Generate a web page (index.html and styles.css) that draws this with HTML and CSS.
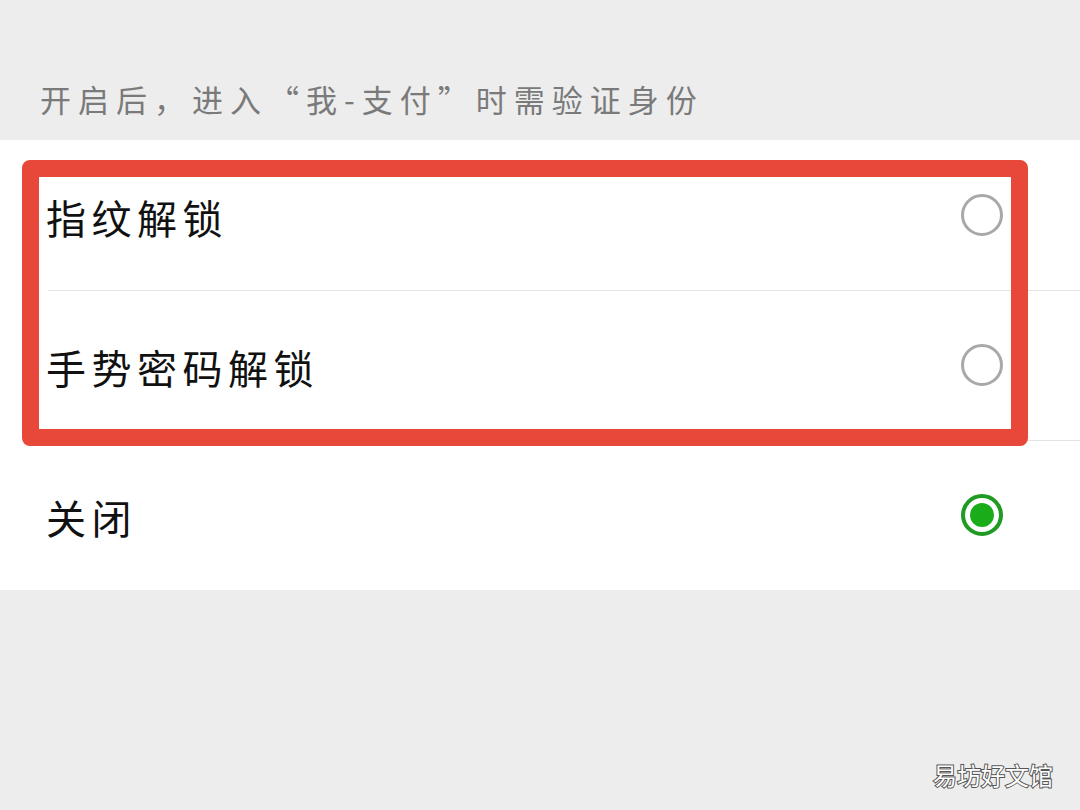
FILE: index.html
```html
<!DOCTYPE html>
<html lang="zh-CN">
<head>
    <meta charset="UTF-8">
    <meta name="viewport" content="width=device-width, initial-scale=1.0">
    <title>支付安全</title>
    <link rel="stylesheet" href="styles.css">
</head>
<body>

    <div class="tip">开启后，进入“我-支付”时需验证身份</div>

    <div class="options">
        <label class="option">
            <span class="option-name">指纹解锁</span>
            <input type="radio" name="lock" value="finger">
            <span class="radio"></span>
        </label>
        <label class="option">
            <span class="option-name">手势密码解锁</span>
            <input type="radio" name="lock" value="gesture">
            <span class="radio"></span>
        </label>
        <label class="option">
            <span class="option-name">关闭</span>
            <input type="radio" name="lock" value="off" checked>
            <span class="radio"></span>
        </label>

        <!-- 标注框 -->
        <div class="mark"></div>
    </div>

    <div class="watermark">易坊好文馆</div>

</body>
</html>
```

FILE: styles.css
```css
body {
    font-family: "Noto Sans CJK SC", "Noto Sans", sans-serif;
    background-color: #ededed;
    margin: 0;
    padding: 0;
    width: 1080px;
    height: 810px;
    position: relative;
    overflow: hidden;
}

.tip {
    height: 140px;
    box-sizing: border-box;
    padding: 77px 0 0 40px;
    line-height: 44px;
    font-size: 31px;
    letter-spacing: 7px;
    color: #7a7a7a;
}

.options {
    position: relative;
    background-color: #ffffff;
}

.option {
    position: relative;
    display: flex;
    align-items: center;
    justify-content: space-between;
    height: 150px;
    padding: 0 77px 0 46px;
    box-sizing: border-box;
}

.option + .option::before {
    content: "";
    position: absolute;
    top: 0;
    left: 48px;
    right: 0;
    border-top: 1px solid #e4e4e4;
}

.option-name {
    font-size: 40px;
    letter-spacing: 5.5px;
    color: #111111;
    padding-top: 4px;
}

.option input {
    display: none;
}

.radio {
    width: 36px;
    height: 36px;
    border: 3px solid #a8a8a8;
    border-radius: 50%;
    box-sizing: content-box;
    position: relative;
}

.option input:checked + .radio {
    width: 34px;
    height: 34px;
    border: 4px solid #1f9a22;
}

.option input:checked + .radio::after {
    content: "";
    position: absolute;
    top: 5px;
    left: 5px;
    width: 24px;
    height: 24px;
    border-radius: 50%;
    background-color: #1aad19;
}

.mark {
    position: absolute;
    top: 20px;
    left: 22px;
    width: 1006px;
    height: 286px;
    box-sizing: border-box;
    border: 17px solid #e8483a;
    border-radius: 8px;
}

.watermark {
    position: absolute;
    right: 27px;
    bottom: 18px;
    font-size: 24px;
    color: #ffffff;
    -webkit-text-stroke: 2px #555555;
    paint-order: stroke fill;
}
```
